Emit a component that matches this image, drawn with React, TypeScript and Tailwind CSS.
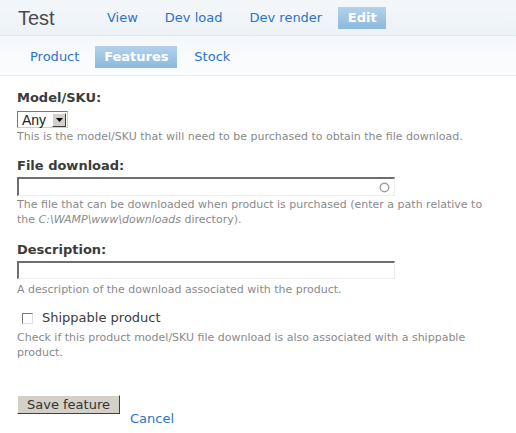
export default function App() {
  return (
    <div className="w-[516px] h-[433px] bg-white text-[#3b3b3b] overflow-hidden" style={{ fontFamily: '"DejaVu Sans", Verdana, sans-serif' }}>
      <div className="h-[36px] flex items-center border-b border-[#e3e8ee] bg-gradient-to-b from-[#f4f7fa] to-[#edf2f7]">
        <span className="ml-[18px] w-[89px] text-[20px] text-[#4a4a4a]" style={{ fontFamily: '"Liberation Sans", Arial, sans-serif' }}>Test</span>
        <nav className="flex items-center text-[13px] text-[#2a74c9]">
          <a>View</a>
          <a className="ml-[27px]">Dev load</a>
          <a className="ml-[27px]">Dev render</a>
          <a className="ml-[16px] h-[22px] w-[48px] flex items-center justify-center font-bold text-white bg-gradient-to-b from-[#b3d2ea] to-[#8bb9de]">Edit</a>
        </nav>
      </div>
      <div className="h-[40px] pt-[3px] flex items-center border-b border-[#e6ebf0] bg-gradient-to-b from-[#f5f8fb] to-[#fbfcfd] text-[13px] text-[#2a74c9]">
        <a className="ml-[30px]">Product</a>
        <a className="ml-[16px] h-[22px] w-[82px] flex items-center justify-center font-bold text-white bg-gradient-to-b from-[#b3d2ea] to-[#8bb9de]">Features</a>
        <a className="ml-[17px]">Stock</a>
      </div>

      <form className="px-[17px] pt-[14px]">
        <div className="text-[13px] font-bold leading-[16px]">Model/SKU:</div>
        <div className="mt-[5px] w-[51px] h-[17px] flex items-center border border-[#7a7a7a] border-b-[#d4d0c8] border-r-[#d4d0c8] bg-white text-[14px] text-[#222]" style={{ fontFamily: '"Liberation Sans", Arial, sans-serif' }}>
          <span className="ml-[4px] flex-1 leading-none">Any</span>
          <span className="w-[14px] h-[14px] mr-[1px] bg-[#d4d0c8] border border-white border-b-[#404040] border-r-[#404040] flex items-center justify-center">
            <svg width="7" height="4" viewBox="0 0 7 4"><path d="M0 0h7L3.5 4z" fill="#000" /></svg>
          </span>
        </div>
        <p className="mt-[1px] text-[11px] leading-[15px] text-[#8a8a8a]">This is the model/SKU that will need to be purchased to obtain the file download.</p>

        <div className="mt-[14px] text-[13px] font-bold leading-[16px]">File download:</div>
        <div className="mt-[3px] w-[378px] h-[19px] flex items-center justify-end border-2 border-[#6e6e6e] border-b-[#eeeeee] border-r-[#eeeeee] border-b-[1px] border-r-[1px] bg-white">
          <svg width="11" height="11" viewBox="0 0 11 11" className="mr-[4px]"><circle cx="5.5" cy="5.5" r="4.3" fill="none" stroke="#a0a0a0" strokeWidth="1.4" /></svg>
        </div>
        <p className="mt-[1px] text-[11px] leading-[15px] text-[#8a8a8a]">
          The file that can be downloaded when product is purchased (enter a path relative to the <em>C:\WAMP\www\downloads</em> directory).
        </p>

        <div className="mt-[15px] text-[13px] font-bold leading-[16px]">Description:</div>
        <div className="mt-[3px] w-[378px] h-[18px] border-2 border-[#6e6e6e] border-b-[#eeeeee] border-r-[#eeeeee] border-b-[1px] border-r-[1px] bg-white" />
        <p className="mt-[3px] text-[11px] leading-[15px] text-[#8a8a8a]">A description of the download associated with the product.</p>

        <label className="mt-[13px] h-[16px] flex items-center text-[13px] text-[#3b3b3b]">
          <span className="ml-[5px] w-[11px] h-[11px] border border-[#777] border-b-[#ddd] border-r-[#ddd] bg-white" />
          <span className="ml-[9px]">Shippable product</span>
        </label>
        <p className="mt-[4px] text-[11px] leading-[15px] text-[#8a8a8a]">Check if this product model/SKU file download is also associated with a shippable product.</p>

        <div className="mt-[35px] flex items-start">
          <button type="button" className="w-[103px] h-[19px] bg-[#d4d0c8] border border-white border-b-[#404040] border-r-[#404040] text-[13px] leading-none text-[#333]">Save feature</button>
          <a className="ml-[10px] mt-[16px] text-[13px] leading-[16px] text-[#2a74c9]">Cancel</a>
        </div>
      </form>
    </div>
  )
}
